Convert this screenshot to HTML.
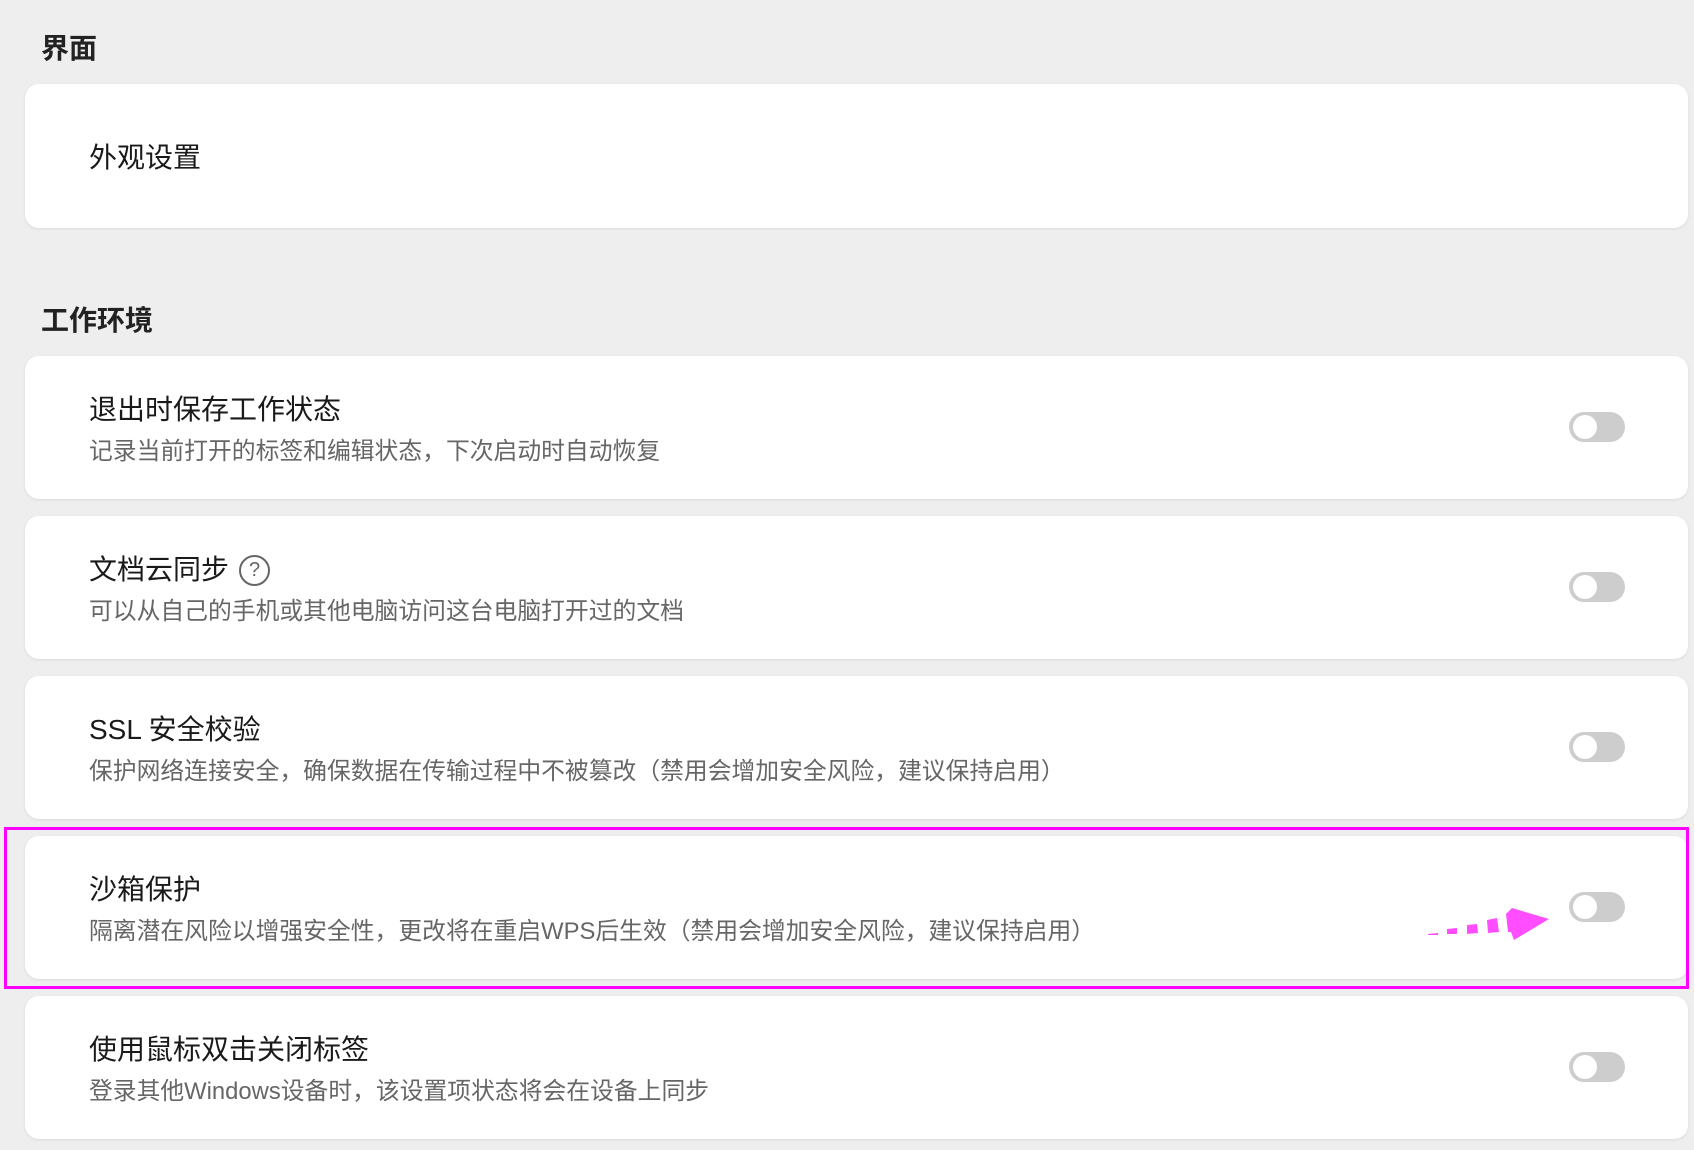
<!DOCTYPE html>
<html><head><meta charset="utf-8"><style>
body{margin:0;width:1694px;height:1150px;background:#eeeeee;font-family:"Liberation Sans","Noto Sans CJK SC",sans-serif;position:relative;overflow:hidden}
.h{position:absolute;left:41px;font-size:28px;font-weight:bold;color:#222}
.card{position:absolute;left:25px;width:1663px;height:143px;background:#fff;border-radius:14px;box-shadow:0 1px 3px rgba(0,0,0,.08)}
.t{position:absolute;left:64px;top:38px;font-size:28px;color:#1a1a1a;line-height:32px}
.d{position:absolute;left:64px;top:82px;font-size:23.8px;color:#666;line-height:28px}
.tg{position:absolute;left:1544px;top:56px;width:56px;height:30px;border-radius:15px;background:#cdcdcd}
.tg:after{content:"";position:absolute;left:4px;top:3px;width:24px;height:24px;border-radius:50%;background:#fff}
.q{display:inline-block;width:27px;height:27px;border:2px solid #666;border-radius:50%;font-size:20px;text-align:center;line-height:27px;color:#666;vertical-align:3px;margin-left:10px}
</style></head><body>
<div class="h" style="top:27px">界面</div>
<div class="card" style="top:84px;height:144px"><div class="t" style="top:58px">外观设置</div></div>
<div class="h" style="top:299px">工作环境</div>
<div class="card" style="top:356px"><div class="t">退出时保存工作状态</div><div class="d">记录当前打开的标签和编辑状态，下次启动时自动恢复</div><div class="tg"></div></div>
<div class="card" style="top:516px"><div class="t">文档云同步<span class="q">?</span></div><div class="d">可以从自己的手机或其他电脑访问这台电脑打开过的文档</div><div class="tg"></div></div>
<div class="card" style="top:676px"><div class="t">SSL 安全校验</div><div class="d">保护网络连接安全，确保数据在传输过程中不被篡改（禁用会增加安全风险，建议保持启用）</div><div class="tg"></div></div>
<div class="card" style="top:836px"><div class="t">沙箱保护</div><div class="d">隔离潜在风险以增强安全性，更改将在重启WPS后生效（禁用会增加安全风险，建议保持启用）</div><div class="tg"></div></div>
<div class="card" style="top:996px"><div class="t">使用鼠标双击关闭标签</div><div class="d">登录其他Windows设备时，该设置项状态将会在设备上同步</div><div class="tg"></div></div>
<div style="position:absolute;left:4px;top:827px;width:1679px;height:156px;border:3px solid #ff00ff"></div>
<svg style="position:absolute;left:0;top:0" width="1694" height="1150">
<g fill="#ff4dff">
<polygon points="1428,934 1438,933 1438,935 1428,935"/>
<polygon points="1447,929 1457,928 1457,934 1447,934"/>
<polygon points="1467,925 1477,924 1478,933 1467,934"/>
<polygon points="1487,920 1497,918 1499,932 1488,933"/>
<polygon points="1506,914 1512,908 1549,919 1514,940 1511,932 1508,932"/>
</g></svg>
</body></html>
